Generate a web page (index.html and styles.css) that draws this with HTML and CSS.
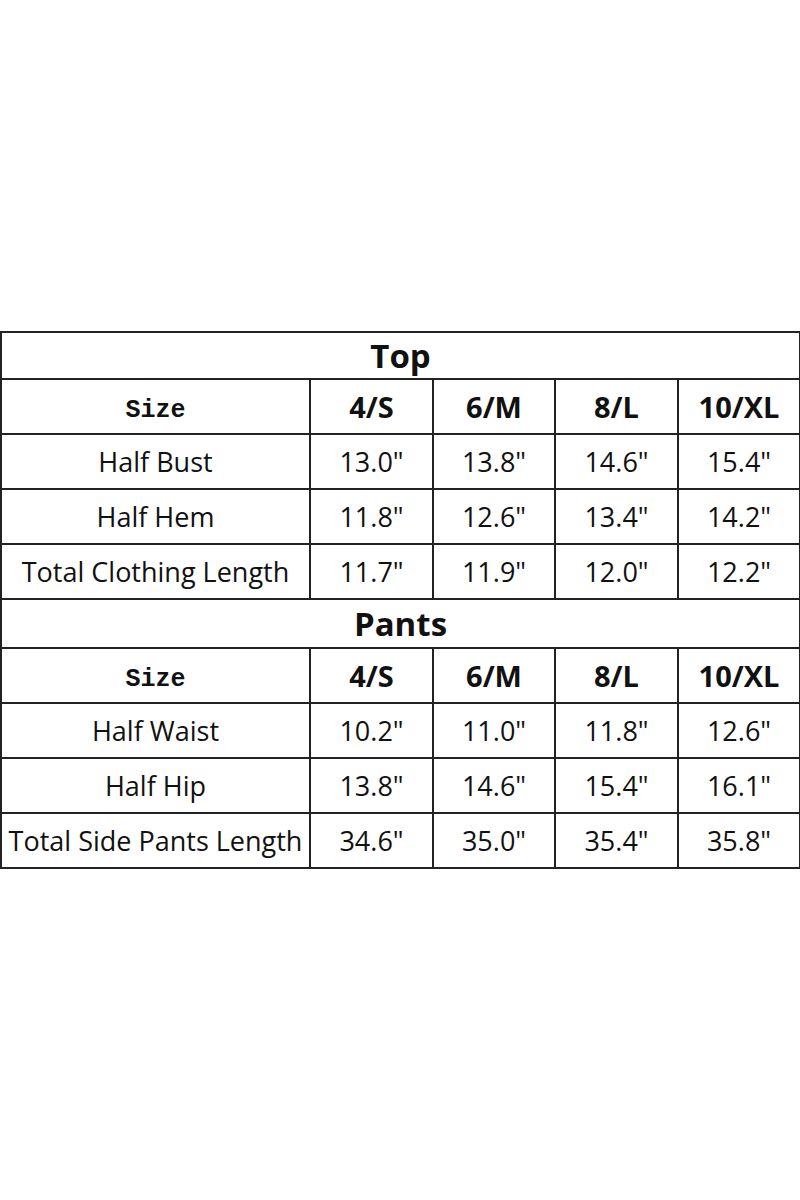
FILE: index.html
```html
<!DOCTYPE html>
<html>
<head>
<meta charset="utf-8">
<link rel="stylesheet" href="styles.css">
</head>
<body>
<div class="page">
<table class="chart">
<colgroup><col class="c0"><col class="c1"><col class="c2"><col class="c3"><col class="c4"></colgroup>
<tr class="title"><td colspan="5">Top</td></tr>
<tr class="head"><td class="size">Size</td><td>4/S</td><td>6/M</td><td>8/L</td><td>10/XL</td></tr>
<tr><td>Half Bust</td><td>13.0"</td><td>13.8"</td><td>14.6"</td><td>15.4"</td></tr>
<tr><td>Half Hem</td><td>11.8"</td><td>12.6"</td><td>13.4"</td><td>14.2"</td></tr>
<tr><td>Total Clothing Length</td><td>11.7"</td><td>11.9"</td><td>12.0"</td><td>12.2"</td></tr>
<tr class="title second"><td colspan="5">Pants</td></tr>
<tr class="head"><td class="size">Size</td><td>4/S</td><td>6/M</td><td>8/L</td><td>10/XL</td></tr>
<tr><td>Half Waist</td><td>10.2"</td><td>11.0"</td><td>11.8"</td><td>12.6"</td></tr>
<tr><td>Half Hip</td><td>13.8"</td><td>14.6"</td><td>15.4"</td><td>16.1"</td></tr>
<tr><td>Total Side Pants Length</td><td>34.6"</td><td>35.0"</td><td>35.4"</td><td>35.8"</td></tr>
</table>
</div>
</body>
</html>
```
FILE: styles.css
```css
html, body {
  margin: 0;
  padding: 0;
  background: #fff;
}
.page {
  padding-top: 331px;
  width: 800px;
}
.chart {
  border-collapse: collapse;
  table-layout: fixed;
  width: 799px;
  margin-left: 0;
  font-family: "Open Sans", "Noto Sans", sans-serif;
  color: #111;
}
.c0 { width: 309px; }
.c1 { width: 123px; }
.c2 { width: 122px; }
.c3 { width: 123px; }
.c4 { width: 122px; }
.chart td {
  border: 2px solid #222;
  text-align: center;
  vertical-align: middle;
  padding: 0;
  height: 53px;
  font-size: 27px;
  white-space: nowrap;
  line-height: 1;
}
.chart tr.title td {
  height: 45px;
  font-size: 33px;
  font-weight: 700;
}
.chart tr.title.second td {
  height: 47px;
}
.chart tr.head td {
  font-size: 29px;
  font-weight: 700;
}
.chart tr.head td.size {
  font-family: "Liberation Mono", "DejaVu Sans Mono", monospace;
  font-size: 25px;
  font-weight: 700;
  padding-top: 8px;
  height: 45px;
}
```
